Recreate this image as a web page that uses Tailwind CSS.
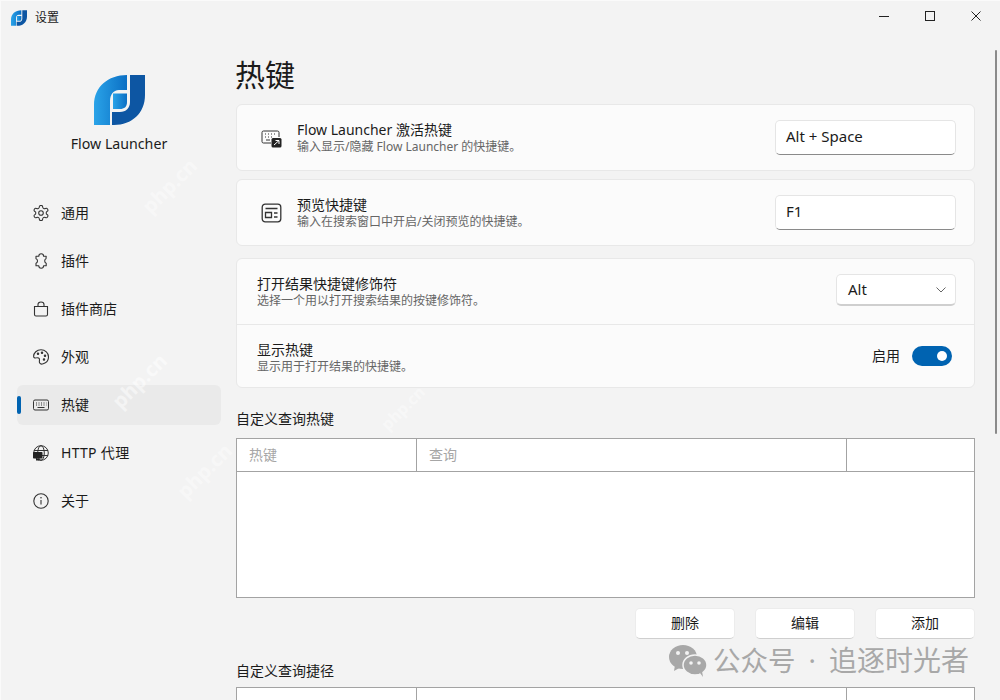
<!DOCTYPE html>
<html lang="zh-CN">
<head>
  <meta charset="UTF-8" />
  <title>设置</title>
  <script src="https://cdn.jsdelivr.net/npm/@tailwindcss/browser@4"></script>
</head>
<body class="bg-[#f3f3f3] font-['Noto_Sans','Noto_Sans_CJK_SC',sans-serif] text-[#1b1b1b]">
<div class="relative w-[1000px] h-[700px] overflow-hidden border-l border-t border-[#fafafa]">

  <!-- Title bar -->
  <div class="flex items-center h-[33px] pl-[10px]">
    <svg class="w-4 h-4" viewBox="0 0 51 50"><defs><linearGradient id="a" x1="0" x2="1"><stop offset="0" stop-color="#2aa3e8"/><stop offset="1" stop-color="#0b6fc4"/></linearGradient></defs><path fill="url(#a)" d="M0 50V30C0 12 14 0 33 0V15H25C19 15 16 20 16 26V50Z"/><path fill="url(#a)" d="M19 18.500H33V27C33 32 30 34 26 34H19Z"/><path fill="#0d56a3" d="M36 0H51V20C51 38 38 50 20 50H18V37H26C32 37 36 33 36 27Z"/></svg>
    <span class="ml-2 text-xs">设置</span>
    <div class="ml-auto flex items-center gap-9 pr-[19px] pb-[3px]">
      <svg class="w-[10px] h-[10px]" viewBox="0 0 10 10"><path d="M0 5.500H10" stroke="#222" fill="none"/></svg>
      <svg class="w-[10px] h-[10px]" viewBox="0 0 10 10"><rect x=".5" y=".5" width="9" height="9" stroke="#222" fill="none"/></svg>
      <svg class="w-[10px] h-[10px]" viewBox="0 0 10 10"><path d="M.5.500 9.500 9.500M9.500.500.500 9.500" stroke="#222" fill="none"/></svg>
    </div>
  </div>

  <div class="flex">
    <!-- Sidebar -->
    <aside class="w-[235px] shrink-0 pl-4 pr-[15px]">
      <div class="flex flex-col items-center pt-[41px] h-[159px]">
        <svg class="w-[51px] h-[50px]" viewBox="0 0 51 50"><defs><linearGradient id="b" x1="0" x2="1"><stop offset="0" stop-color="#2aa3e8"/><stop offset="1" stop-color="#0b6fc4"/></linearGradient></defs><path fill="url(#b)" d="M0 50V30C0 12 14 0 33 0V15H25C19 15 16 20 16 26V50Z"/><path fill="url(#b)" d="M19 18.500H33V27C33 32 30 34 26 34H19Z"/><path fill="#0d56a3" d="M36 0H51V20C51 38 38 50 20 50H18V37H26C32 37 36 33 36 27Z"/></svg>
        <div class="mt-[9px] text-[14.200px] leading-5">Flow Launcher</div>
      </div>
      <nav class="flex flex-col gap-2 text-sm">
        <div class="flex items-center h-10 pl-4 gap-3">
          <svg class="w-4 h-4" viewBox="1.500 1.500 21 21" fill="none" stroke="#333" stroke-width="1.400"><path d="M12.220 2h-.44a2 2 0 0 0-2 2v.180a2 2 0 0 1-1 1.730l-.430.250a2 2 0 0 1-2 0l-.150-.080a2 2 0 0 0-2.730.730l-.220.380a2 2 0 0 0 .730 2.730l.150.100a2 2 0 0 1 1 1.720v.510a2 2 0 0 1-1 1.740l-.150.090a2 2 0 0 0-.730 2.730l.220.380a2 2 0 0 0 2.730.730l.150-.080a2 2 0 0 1 2 0l.430.250a2 2 0 0 1 1 1.730V20a2 2 0 0 0 2 2h.440a2 2 0 0 0 2-2v-.180a2 2 0 0 1 1-1.730l.430-.250a2 2 0 0 1 2 0l.150.080a2 2 0 0 0 2.730-.730l.220-.390a2 2 0 0 0-.730-2.730l-.150-.080a2 2 0 0 1-1-1.740v-.500a2 2 0 0 1 1-1.740l.150-.090a2 2 0 0 0 .730-2.730l-.220-.380a2 2 0 0 0-2.730-.730l-.150.080a2 2 0 0 1-2 0l-.430-.250a2 2 0 0 1-1-1.730V4a2 2 0 0 0-2-2z"/><circle cx="12" cy="12" r="3"/></svg>
          <span>通用</span>
        </div>
        <div class="flex items-center h-10 pl-4 gap-3">
          <svg class="w-4 h-4" viewBox="0 0 16 16" fill="none" stroke="#333" stroke-width="1.100" stroke-linejoin="round"><path d="M5.800 3.200C5.800 1.800 6.800.8 8.200.8s2.400 1 2.400 2.400h2.600l-.2 2.600c-1 .3-1.300 1.200-1.300 2.200s.5 1.900 1.500 2.200v2.600h-2.600c0 1.400-1 2.400-2.400 2.400s-2.400-1-2.400-2.400H3v-2.600c1-.3 1.500-1.200 1.500-2.200S4 6.100 3 5.800V3.200z"/></svg>
          <span>插件</span>
        </div>
        <div class="flex items-center h-10 pl-4 gap-3">
          <svg class="w-4 h-4" viewBox="0 0 16 16" fill="none" stroke="#333" stroke-width="1.100"><path d="M1.500 5.500h13v8a1.500 1.500 0 0 1-1.500 1.500H3a1.500 1.500 0 0 1-1.500-1.500zM5 5.500V3.500a3 2.500 0 0 1 6 0v2"/></svg>
          <span>插件商店</span>
        </div>
        <div class="flex items-center h-10 pl-4 gap-3">
          <svg class="w-4 h-4" viewBox="0 0 16 16" fill="none" stroke="#333" stroke-width="1.100"><path d="M8 .800C3.800.800.700 3.800.600 7.300c0 2 1.800 1.700 3 1.500 1.500-.300 2.900.300 2.900 1.900 0 1.400-.500 2.200.200 3.300.600 1 2 1.300 3.500.700 3-1 5.300-3.600 5.300-6.800C15.500 4 12.200.800 8 .800z"/><circle cx="5" cy="4.800" r=".7" fill="#333"/><circle cx="9" cy="3.800" r=".7" fill="#333"/><circle cx="12" cy="6.800" r=".7" fill="#333"/><circle cx="11" cy="10.500" r=".7" fill="#333"/></svg>
          <span>外观</span>
        </div>
        <div class="relative flex items-center h-10 pl-4 gap-3 bg-[#eaeaea] rounded-md">
          <div class="absolute left-0 top-[11px] w-[4px] h-[18px] rounded-full bg-[#0063b1]"></div>
          <svg class="w-4 h-4" viewBox="0 0 16 16" fill="none" stroke="#333" stroke-width="1"><rect x=".5" y="3" width="15" height="10" rx="1.500"/><path d="M3 6h1M5.500 6h1M8 6h1M10.500 6h1M13 6h.5M3 8h1M5.500 8h1M8 8h1M10.500 8h1M13 8h.5M4.500 10.500h7"/></svg>
          <span>热键</span>
        </div>
        <div class="flex items-center h-10 pl-4 gap-3">
          <svg class="w-4 h-4" viewBox="0 0 16 16" fill="none" stroke="#333" stroke-width="1"><circle cx="8" cy="8" r="7.300"/><ellipse cx="8" cy="8" rx="3.300" ry="7.300"/><path d="M1 5.500h14M1 10.500h14"/><rect x="0" y="7" width="9.500" height="6.500" rx=".8" fill="#222" stroke="none"/><rect x="3" y="13.500" width="3.500" height="2" fill="#222" stroke="none"/></svg>
          <span class="tracking-[.3px]">HTTP 代理</span>
        </div>
        <div class="flex items-center h-10 pl-4 gap-3">
          <svg class="w-4 h-4" viewBox="0 0 16 16" fill="none" stroke="#333" stroke-width="1.100"><circle cx="8" cy="8" r="7.200"/><path d="M8 7v4.500"/><circle cx="8" cy="4.800" r=".8" fill="#333" stroke="none"/></svg>
          <span>关于</span>
        </div>
      </nav>
    </aside>

    <!-- Main content -->
    <main class="w-[739px] shrink-0">
      <h1 class="text-[30px] leading-10 h-[70px] pt-[21px] -ml-px box-border">热键</h1>

      <div class="flex items-center h-[67px] mb-2 pl-6 pr-[18px] bg-[#fbfbfb] border border-[#e8e8e8] rounded-md">
        <svg class="w-[21px] h-[20px] mr-[15px]" viewBox="0 0 21 20" fill="none" stroke="#333" stroke-width="1"><path d="M10 15H2.500A1.500 1.500 0 0 1 1 13.500v-9A1.500 1.500 0 0 1 2.500 3h14A1.500 1.500 0 0 1 18 4.500V9"/><path d="M4 6h1M7 6h1M10 6h1M13 6h1M4 9h1M7 9h1M10 9h1M5 12h4"/><rect x="10.500" y="10" width="10" height="9.500" rx="1.500" fill="#222" stroke="none"/><path d="M13 17l5-4.500M14.500 12.500h3.500v3.500" stroke="#fff"/></svg>
        <div class="flex flex-col">
          <span class="text-sm leading-[18px]">Flow Launcher 激活热键</span>
          <span class="text-xs leading-4 text-[#666]">输入显示/隐藏 Flow Launcher 的快捷键。</span>
        </div>
        <div class="ml-auto w-[181px] h-[35px] flex items-center pl-[10px] pb-[2px] bg-white border border-[#e5e5e5] border-b-[#8a8a8a] rounded-[5px] text-[15px]">Alt + Space</div>
      </div>

      <div class="flex items-center h-[67px] mb-3 pl-6 pr-[18px] bg-[#fbfbfb] border border-[#e8e8e8] rounded-md">
        <svg class="w-[21px] h-[20px] mr-[15px]" viewBox="0 0 21 20" fill="none" stroke="#333" stroke-width="1.300"><rect x="1.200" y="1.200" width="18.600" height="17.600" rx="3"/><path d="M4.500 5.500h12M4.500 9.500h6v5h-6zM13 10h3.500M13 14h3.500"/></svg>
        <div class="flex flex-col">
          <span class="text-sm leading-[18px]">预览快捷键</span>
          <span class="text-xs leading-4 text-[#666]">输入在搜索窗口中开启/关闭预览的快捷键。</span>
        </div>
        <div class="ml-auto w-[181px] h-[35px] flex items-center pl-[10px] pb-[3px] bg-white border border-[#e5e5e5] border-b-[#8a8a8a] rounded-[5px] text-[15px]">F1</div>
      </div>

      <div class="bg-[#fbfbfb] border border-[#e8e8e8] rounded-md">
        <div class="flex items-center h-[66px] pl-5 pr-[18px] border-b border-[#e8e8e8]">
          <div class="flex flex-col">
            <span class="text-sm leading-[18px]">打开结果快捷键修饰符</span>
            <span class="text-xs leading-4 text-[#666]">选择一个用以打开搜索结果的按键修饰符。</span>
          </div>
          <div class="ml-auto w-[120px] h-[32px] mb-[3px] flex items-center justify-between pl-[11px] pr-[9px] bg-white border border-[#e5e5e5] border-b-2 border-b-[#cfcfcf] rounded-[5px] text-[15px]">
            Alt
            <svg class="w-[10px] h-[6px]" viewBox="0 0 10 6"><path d="M.5.500 5 5 9.500.500" stroke="#666" fill="none"/></svg>
          </div>
        </div>
        <div class="flex items-center h-[62px] pl-5 pr-[22px]">
          <div class="flex flex-col pt-1">
            <span class="text-sm leading-[18px]">显示热键</span>
            <span class="text-xs leading-4 text-[#666]">显示用于打开结果的快捷键。</span>
          </div>
          <span class="ml-auto mr-3 text-sm">启用</span>
          <div class="w-10 h-5 flex items-center justify-end pr-[5px] rounded-full bg-[#0063b1]">
            <div class="w-[10px] h-[10px] rounded-full bg-white"></div>
          </div>
        </div>
      </div>

      <div class="mt-[21px] mb-[9px] text-sm leading-5">自定义查询热键</div>
      <div class="h-[160px] bg-white border border-[#a3a3a3]">
        <div class="grid grid-cols-[180px_430px_1fr] h-[33px] border-b border-[#a3a3a3] text-sm text-[#a6a6a6]">
          <div class="flex items-center pl-3 border-r border-[#a3a3a3]">热键</div>
          <div class="flex items-center pl-3 border-r border-[#a3a3a3]">查询</div>
          <div></div>
        </div>
      </div>
      <div class="flex justify-end gap-5 mt-[10px] text-sm">
        <button class="w-[100px] h-[31px] pb-[2px] bg-white border border-[#ececec] border-b-[#cfcfcf] rounded-[5px]">删除</button>
        <button class="w-[100px] h-[31px] pb-[2px] bg-white border border-[#ececec] border-b-[#cfcfcf] rounded-[5px]">编辑</button>
        <button class="w-[100px] h-[31px] pb-[2px] bg-white border border-[#ececec] border-b-[#cfcfcf] rounded-[5px]">添加</button>
      </div>

      <div class="mt-[22px] mb-[6px] text-sm leading-5">自定义查询捷径</div>
      <div class="h-[60px] bg-white border border-[#a3a3a3]">
        <div class="grid grid-cols-[180px_430px_1fr] h-full">
          <div class="border-r border-[#a3a3a3]"></div>
          <div class="border-r border-[#a3a3a3]"></div>
          <div></div>
        </div>
      </div>
    </main>
  </div>

  <!-- Scrollbar -->
  <div class="absolute left-[994px] top-[49px] w-[2px] h-[384px] rounded-full bg-[#8a8a8a]"></div>

  <!-- Watermarks -->
  <div class="absolute left-[135px] top-[170px] -rotate-45 text-[20px] font-bold text-white/40">php.cn</div>
  <div class="absolute left-[105px] top-[365px] -rotate-45 text-[20px] font-bold text-white/50">php.cn</div>
  <div class="absolute left-[170px] top-[455px] -rotate-45 text-[20px] font-bold text-white/40">php.cn</div>
  <div class="absolute left-[375px] top-[395px] -rotate-45 text-[16px] font-bold text-white/40">php.cn</div>

  <!-- WeChat account mark -->
  <div class="absolute left-[668px] top-[643px] flex items-center gap-[6px] text-[27.500px] leading-8 text-[#a8a8a8]">
    <svg class="w-[38px] h-[32px]" viewBox="0 0 38 32" fill="#a8a8a8">
      <ellipse cx="14" cy="12" rx="14" ry="12"/><path d="M6 20l-1 6 7-4z"/>
      <ellipse cx="26" cy="20" rx="12" ry="10" stroke="#f3f3f3" stroke-width="1.500"/><path d="M31 28l3 4-1-6z"/>
      <circle cx="9" cy="8" r="2" fill="#f3f3f3"/><circle cx="18" cy="8" r="2" fill="#f3f3f3"/>
      <circle cx="22" cy="18" r="1.800" fill="#f3f3f3"/><circle cx="30" cy="18" r="1.800" fill="#f3f3f3"/>
    </svg>
    <span>公众号<span class="mx-[13px]">·</span><span class="text-[28px]">追逐时光者</span></span>
  </div>
</div>
</body>
</html>
